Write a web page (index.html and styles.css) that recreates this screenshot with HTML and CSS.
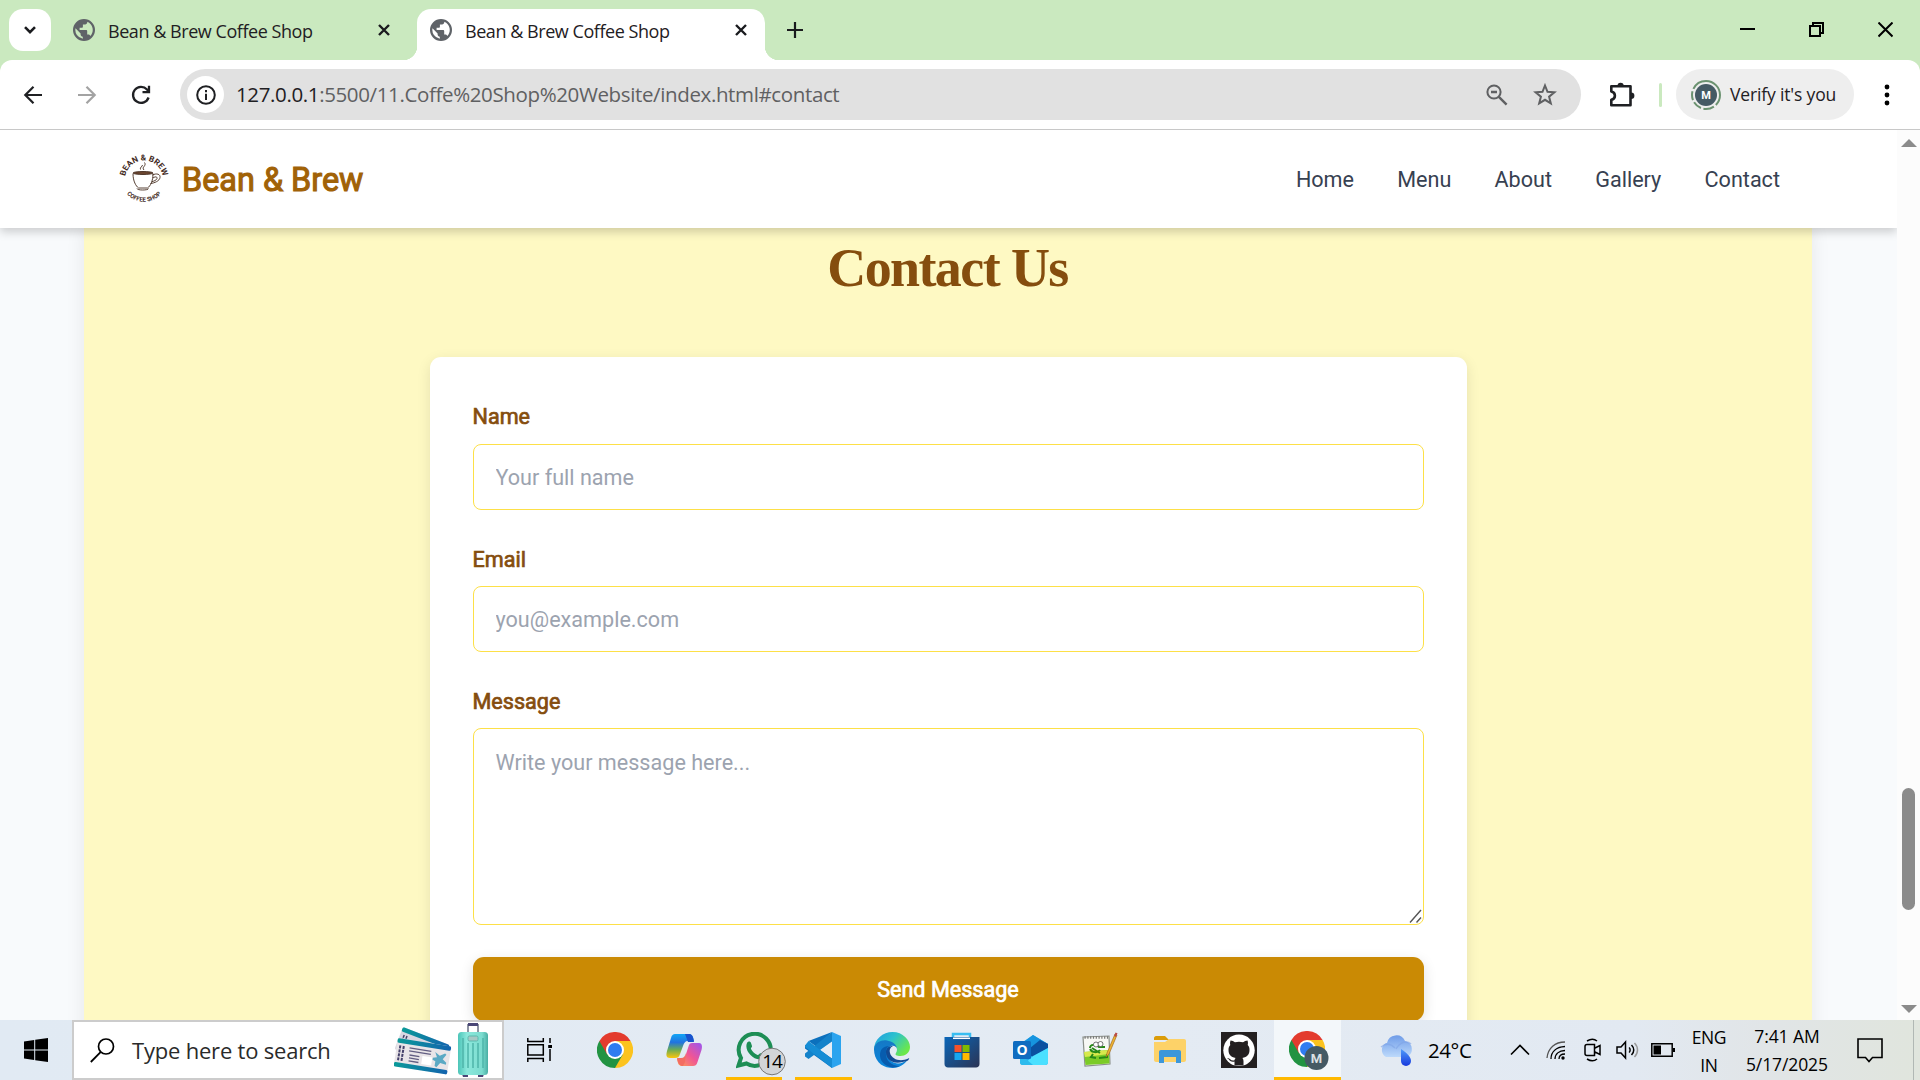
FILE: index.html
```html
<!DOCTYPE html>
<html lang="en">
<head>
<meta charset="utf-8">
<title>Bean &amp; Brew Coffee Shop</title>
<link rel="stylesheet" href="styles.css">
</head>
<body>
<svg width="0" height="0" class="defs">
  <defs>
    <symbol id="globe" viewBox="0 0 24 24"><path fill="#5f6368" d="M12 1a11 11 0 1 0 0 22 11 11 0 0 0 0-22zm-1.2 19.700A8.800 8.800 0 0 1 3.500 10.300L8.600 15.400v1.100c0 1.200 1 2.200 2.200 2.200zM18.400 17.900c-.3-.9-1.100-1.500-2.100-1.500h-1.100v-3.300c0-.6-.5-1.100-1.100-1.100H7.600V9.800h2.200c.6 0 1.100-.5 1.100-1.100V6.500h2.200c1.200 0 2.200-1 2.200-2.200v-.5a8.800 8.800 0 0 1 3.100 14.100z"/></symbol>
    <symbol id="close" viewBox="0 0 12 12"><path d="M1 1l10 10M11 1L1 11" stroke="#1a1b1e" stroke-width="2.400" fill="none"/></symbol>
    <symbol id="chrome" viewBox="0 0 36 36">
      <path fill="#e33b2e" d="M18 18L2.400 9A18 18 0 0 1 33.600 9z"/>
      <path fill="#fcc31e" d="M18 18L33.600 9A18 18 0 0 1 18 36z"/>
      <path fill="#229342" d="M18 18V36A18 18 0 0 1 2.400 9z"/>
      <path fill="#e33b2e" d="M2.400 9L10.200 22.500 18 9z"/>
      <path fill="#fcc31e" d="M33.600 9H18L25.800 22.500 18 36z"/>
      <path fill="#229342" d="M18 36L25.800 22.500H10.200z"/>
      <circle cx="18" cy="18" r="9" fill="#fff"/><circle cx="18" cy="18" r="7" fill="#2f7cf0"/>
    </symbol>
    <linearGradient id="gBlue" x1="0" y1="0" x2="1" y2="1"><stop offset="0" stop-color="#0a66b8"/><stop offset="1" stop-color="#2b3454"/></linearGradient>
    <linearGradient id="gCopL" x1="0" y1="0" x2="0" y2="1"><stop offset="0" stop-color="#12a5f5"/><stop offset=".35" stop-color="#2173e0"/><stop offset=".65" stop-color="#6aab55"/><stop offset="1" stop-color="#fdc60b"/></linearGradient>
    <linearGradient id="gCopR" x1="1" y1="0" x2="0" y2="1"><stop offset="0" stop-color="#9b56f0"/><stop offset=".5" stop-color="#ef5596"/><stop offset="1" stop-color="#ffa04f"/></linearGradient>
    <linearGradient id="gEdge" x1="0" y1="0" x2="1" y2=".6"><stop offset="0" stop-color="#1f9be2"/><stop offset=".5" stop-color="#2cc2cd"/><stop offset="1" stop-color="#6be84a"/></linearGradient>
    <linearGradient id="gEdge2" x1="0" y1="0" x2="0" y2="1"><stop offset="0" stop-color="#1578c5"/><stop offset="1" stop-color="#0a86dc"/></linearGradient>
    <linearGradient id="gCloud" x1="0" y1="0" x2="0" y2="1"><stop offset="0" stop-color="#6f9ce8"/><stop offset="1" stop-color="#bcd9fb"/></linearGradient>
    <linearGradient id="gDrop" x1="0" y1="0" x2="0" y2="1"><stop offset="0" stop-color="#4d9bfa"/><stop offset="1" stop-color="#1739dd"/></linearGradient>
    <linearGradient id="gCase" x1="0" y1="0" x2="1" y2="0"><stop offset="0" stop-color="#4cc5b8"/><stop offset=".3" stop-color="#8ce8dc"/><stop offset=".8" stop-color="#7bdccf"/><stop offset="1" stop-color="#49aea3"/></linearGradient>
    <linearGradient id="gTicket" x1="0" y1="0" x2="1" y2="0"><stop offset="0" stop-color="#0c9a99"/><stop offset="1" stop-color="#1263ae"/></linearGradient>
  </defs>
</svg>

<div class="screen">
  <div class="tabstrip">
    <button class="tab-search"><svg width="14" height="10" viewBox="0 0 14 10"><path d="M2 2.200l5 5 5-5" fill="none" stroke="#1a1b1e" stroke-width="2.600"/></svg></button>
    <div class="tab"><svg class="favicon"><use href="#globe"/></svg><span class="tab-title">Bean &amp; Brew Coffee Shop</span><svg class="tab-close"><use href="#close"/></svg></div>
    <div class="tab active"><svg class="favicon"><use href="#globe"/></svg><span class="tab-title">Bean &amp; Brew Coffee Shop</span><svg class="tab-close"><use href="#close"/></svg></div>
    <svg class="new-tab" viewBox="0 0 16 16"><path d="M8 0v16M0 8h16" stroke="#1a1b1e" stroke-width="2.200"/></svg>
    <div class="window-controls">
      <svg width="15" height="16"><path d="M0 7h15" stroke="#000" stroke-width="2"/></svg>
      <svg width="15" height="16" viewBox="0 0 15 16"><path d="M1 4h10v10H1zM4 4V1h10v10h-3" fill="none" stroke="#000" stroke-width="2"/></svg>
      <svg width="15" height="16" viewBox="0 0 15 16"><path d="M.5 .5l14 14M14.500 .5l-14 14" stroke="#000" stroke-width="2"/></svg>
    </div>
  </div>

  <div class="toolbar">
    <div class="nav-buttons">
      <svg width="20" height="20" viewBox="0 0 20 20"><path d="M19 10H3M10.500 1.800L2.300 10l8.200 8.200" fill="none" stroke="#1f2023" stroke-width="2.200"/></svg>
      <svg width="20" height="20" viewBox="0 0 20 20"><path d="M1 10h16M9.500 1.800l8.200 8.200-8.200 8.200" fill="none" stroke="#a3a3a3" stroke-width="2.200"/></svg>
      <svg width="20" height="20" viewBox="0 0 20 20"><path d="M17.600 12.500A8 8 0 1 1 16 4.500l2 2.200M18 .8v6.400h-6.500" fill="none" stroke="#1f2023" stroke-width="2.300"/></svg>
    </div>
    <div class="omnibox">
      <div class="info"><svg width="20" height="20" viewBox="0 0 20 20"><circle cx="10" cy="10" r="8.800" fill="none" stroke="#1f2023" stroke-width="2"/><path d="M10 8.800V15M10 5v2.200" stroke="#1f2023" stroke-width="2"/></svg></div>
      <span class="url"><b>127.0.0.1</b>:5500/11.Coffe%20Shop%20Website/index.html#contact</span>
      <svg class="zoom" width="22" height="22" viewBox="0 0 22 22"><circle cx="8" cy="8" r="6.600" fill="none" stroke="#5f6062" stroke-width="2"/><path d="M5 8h6M12.600 12.600l8 8" stroke="#5f6062" stroke-width="2.400"/></svg>
      <svg class="star" width="24" height="23" viewBox="0 0 24 23"><path d="M12 2.500l2.500 6.300 6.900.5-5.300 4.400 1.700 6.700L12 16.800l-5.800 3.600 1.700-6.700-5.300-4.400 6.900-.5z" fill="none" stroke="#5f6062" stroke-width="2"/></svg>
    </div>
    <svg class="puzzle" width="26" height="26" viewBox="0 0 26 26"><path d="M3 4.200h18.500v19H2.300v-5.400c4.800-1 4.800-7.200 0-8.200V4.200z" fill="none" stroke="#1f2023" stroke-width="2.600" stroke-linejoin="round"/><path d="M8.500 4a3.100 3.300 0 0 1 6.200 0zM22 10.500a3.300 3.100 0 0 1 0 6.400z" fill="#1f2023"/></svg>
    <i class="divider"></i>
    <div class="profile">
      <svg width="32" height="32" viewBox="0 0 32 32"><circle cx="16" cy="16" r="14" fill="none" stroke="#6b9270" stroke-width="2" stroke-dasharray="11 2.500 11 2.500 9 2.500 9 2.500 40"/><circle cx="16" cy="16" r="11" fill="#455a64"/><text x="16" y="20" text-anchor="middle" class="avatar-letter">M</text></svg>
      <span>Verify it's you</span>
    </div>
    <svg class="menu-dots" width="6" height="22" viewBox="0 0 6 22"><circle cx="3" cy="3" r="2.400"/><circle cx="3" cy="11" r="2.400"/><circle cx="3" cy="19" r="2.400"/></svg>
  </div>

  <div class="viewport">
    <div class="page">
      <header class="site-header">
        <div class="brand">
          <svg class="logo" width="50" height="50" viewBox="0 0 50 50">
            <path id="arcTop" d="M6 24.500A19 19 0 0 1 44 24.500" fill="none"/>
            <path id="arcBottom" d="M4.800 35A23.300 23.300 0 0 0 45.200 35" fill="none"/>
            <text class="logo-top"><textPath href="#arcTop" startOffset="50%" text-anchor="middle">BEAN &amp; BREW</textPath></text>
            <text class="logo-bottom"><textPath href="#arcBottom" startOffset="50%" text-anchor="middle">COFFEE SHOP</textPath></text>
            <g fill="none" stroke="#442b1e" stroke-width=".9"><path d="M14 18.500c0 8 3 12.500 5.500 14.500h9c3-2 5.500-7 5.500-14.500"/><ellipse cx="24" cy="18" rx="10" ry="1.500" fill="#6b4630"/><path d="M33.500 20c4-2 8-1 7.500 2.500-.4 3.500-5.500 5.500-9.500 6M34 23c2-1.600 4.500-1.600 4 .6-.5 1.500-3 2.600-5 3M18 33.500c0 2 11.500 2 11.500 0M25 15c-3-3 3-4 .5-7.500M21.500 14.500c-1-2 2-3 2-4.500"/></g>
          </svg>
          <span class="brand-name">Bean &amp; Brew</span>
        </div>
        <nav class="site-nav"><a>Home</a><a>Menu</a><a>About</a><a>Gallery</a><a>Contact</a></nav>
      </header>
      <main class="contact">
        <h2>Contact Us</h2>
        <form class="card">
          <label>Name</label>
          <input type="text" placeholder="Your full name">
          <label>Email</label>
          <input type="email" placeholder="you@example.com">
          <label>Message</label>
          <div class="message-field">
            <textarea placeholder="Write your message here..."></textarea>
            <svg class="grip" width="13" height="14" viewBox="0 0 13 14"><path d="M1 13.500L12 1M7.500 13.500L12 8.500" stroke="#555" stroke-width="1.400"/></svg>
          </div>
          <button type="button" class="send">Send Message</button>
        </form>
      </main>
    </div>
    <div class="scrollbar">
      <svg width="16" height="8"><path d="M8 0l8 8H0z" fill="#8b8b8b"/></svg>
      <i class="thumb"></i>
      <svg width="16" height="8"><path d="M0 0h16L8 8z" fill="#8b8b8b"/></svg>
    </div>
  </div>

  <div class="taskbar">
    <div class="start"><svg width="24" height="24" viewBox="0 0 24 24"><path d="M0 3.400l10.200-1.500v9.600H0zM11.200 1.700L24 0v11.500H11.200zM0 12.500h10.200v9.600L0 20.600zM11.200 12.500H24V24l-12.800-1.700z"/></svg></div>
    <div class="search">
      <svg width="25" height="25" viewBox="0 0 25 25"><circle cx="16" cy="8.500" r="7.500" fill="none" stroke="#000" stroke-width="1.700"/><path d="M10.800 13.800L.8 24" stroke="#000" stroke-width="1.800"/></svg>
      <span>Type here to search</span>
      <svg class="travel" width="98" height="56" viewBox="0 0 98 56">
        <g transform="translate(9 5) rotate(21)"><rect width="50" height="24" rx="2" fill="#d9d8e2"/><rect width="50" height="4.500" rx="1.500" fill="url(#gTicket)"/><path d="M4 7v14M7 7v14" stroke="#45416a" stroke-width="1.500" stroke-dasharray="3 1"/></g>
        <g transform="translate(4 16) rotate(9)"><rect width="54" height="28" rx="2" fill="#e9e5e8"/><rect width="54" height="4.500" rx="1.500" fill="url(#gTicket)"/><rect y="24" width="54" height="4.500" rx="1.500" fill="url(#gTicket)"/><path d="M3.500 7v15M7 7v15" stroke="#45416a" stroke-width="2" stroke-dasharray="3 1"/><path d="M13 8h22M13 11h22M14 15h10M14 18h10M14 21h10" stroke="#625e82" stroke-width="1.300"/><rect x="27" y="14" width="10" height="8" fill="#fff"/><path d="M39 8l5 3 5-3 1.500 1-3 5 4 3v2l-6-1-3 5-2-1v-5l-3-1v-2l4-1z" fill="#5ba9c4"/></g>
        <path d="M74 12V3h10v9" fill="none" stroke="#8d93a2" stroke-width="2"/><path d="M74 2.500h10" stroke="#4a4776" stroke-width="3"/>
        <path d="M68 52h6v3h-5zM84 52h6l-1 3h-5z" fill="#4a4776"/><rect x="64" y="10" width="30" height="43" rx="3.500" fill="url(#gCase)"/><path d="M69 16v30M74 21v25M79 21v25M84 21v25M89 16v30" stroke="#4fb5aa" stroke-width="1.500"/><rect x="74" y="14" width="10" height="5" rx="1.500" fill="#a6c8c5" stroke="#5bb9ad"/>
      </svg>
    </div>
    <div class="task-view"><svg width="25" height="24" viewBox="0 0 25 24" fill="none" stroke="#000" stroke-width="1.500"><path d="M.8 0v3.500h15.500V0M.8 24v-3.500h15.500V24M.8 6.800h15.500V17H.8z"/><path d="M23 0v5M23 11v12"/><path d="M21.200 8.500h3.800" stroke-width="3"/></svg></div>
    <div class="apps">
      <div class="app"><svg width="36" height="36"><use href="#chrome"/></svg></div>
      <div class="app"><svg width="36" height="36" viewBox="0 0 36 36"><path d="M9 2h14c3 0 4 2 5 7h-6c-3 0-4 2-5 5l-3 8c-1 3-2 4-5 4H4c-4 0-4-3-3-7L5 6c.8-3 2-4 4-4z" fill="url(#gCopL)"/><path d="M19 2h4c3 0 4 2 5 8h-6z" fill="#1a52cc"/><path d="M27 34H16c-3 0-4-2-5-7h4c3 0 4-2 5-5l3-9c1-2 2-2 5-2h5c3 0 3.500 3 2.500 7l-4 12c-.8 3-2.500 4-4.500 4z" fill="url(#gCopR)"/><path d="M11 26h4c3 0 4-2 5-5l-1 9-2 4c-3 0-5-2-6-8z" fill="#f36d62"/></svg></div>
      <div class="app running"><svg class="with-badge" width="50" height="44" viewBox="0 0 50 44"><path d="M2.500 33.500L5 26A16 16 0 1 1 10.500 31.500z" fill="none" stroke="#1d8e55" stroke-width="4"/><path d="M11 11c1-2 3.500-2 4 0l1 3c.4 1-1.500 2-1 3 1.500 3 4 5 6.500 6 1.300.2 2-2 3-1.800l4 2c1 2-2 4.500-5 4.300C16 27 8 18 11 11z" fill="#1d8e55"/><circle cx="36" cy="29.500" r="13.300" fill="#d3d5d7" stroke="#777" stroke-width="1"/><text x="36" y="36" text-anchor="middle" class="badge-text">14</text></svg></div>
      <div class="app running"><svg width="36" height="36" viewBox="0 0 36 36"><path d="M27 0L9.500 16.500 3.500 11.500 0 13.500v3L27 36v-10L3.500 9" fill="#0b70bd"/><path d="M27 10L3.500 27 0 24.500v-3L27 0z" fill="#1382ca"/><path d="M27 9.500L15 18l12 8.500z" fill="#e6edf5"/><path d="M0 13.500L3.500 9 27 27v9L0 15z" fill="#168dd5"/><path d="M27 0l9 4v28l-9 4z" fill="#2ba4ef"/></svg></div>
      <div class="app"><svg width="36" height="36" viewBox="0 0 36 36"><path d="M0 18C0 7 9 0 18.500 0 29 0 36 8 36 15c0 6-5 9-9.500 9-4 0-6-1-4.500-3 3-5-1-9-6-9-6 0-10 4-10 11z" fill="url(#gEdge)"/><path d="M0 17C1 10 8 7.500 13 8.500c5 .8 10 4 10 8.500 0-2-3-4-6-3-5 2-5 11 0 15 5 4 12 3 17-2-4 7-11 9.500-18 8.800C7 35 0 28 0 17z" fill="url(#gEdge2)"/><path d="M12 20c0 8 7 14 22 8.500l1-1.500c.5-.5 0-1-.7-.5C27 30 18 28 16 21c-1-4 1-6 3-7-4 0-7 2-7 6z" fill="#124a93"/><path d="M12 20c-1 7 4 14 14 14-9 4-19-1-20-10-.3-6 3-10 9-10-2 1-3 3-3 6z" fill="#075cae"/></svg></div>
      <div class="app"><svg width="36" height="36" viewBox="0 0 36 36"><path d="M9 6V2h17v4" fill="none" stroke="#38bdf1" stroke-width="2.500"/><path d="M.5 5h35v27c0 2-1.500 3.500-3.500 3.500H4C2 35.500.5 34 .5 32z" fill="url(#gBlue)"/><path d="M9 6.300h17" stroke="#fff" stroke-width="1.500"/><path fill="#f4522a" d="M10.500 13h7v7h-7z"/><path fill="#7fba00" d="M18.500 13h7v7h-7z"/><path fill="#16a7ef" d="M10.500 21h7v7h-7z"/><path fill="#ffb900" d="M18.500 21h7v7h-7z"/></svg></div>
      <div class="app"><svg width="36" height="32" viewBox="0 0 36 32"><path d="M20 1l15 9v18c0 2-1 3-3 3H10c-2 0-3-1-3-3V10z" fill="#28a8ea"/><path d="M20 1l15 9-15 9L8 10z" fill="#1694df"/><path d="M35 10v4L20 23l-8-5 15-12z" fill="#0b50a0"/><path d="M35 14v14c0 2-1 3-3 3H10l10-9z" fill="#4be0ff"/><path d="M7 20l13 11H10c-2 0-3-1-3-3z" fill="#2cbbed"/><rect y="7" width="18" height="18" rx="1.500" fill="#0f6cc0"/><text x="9" y="21" text-anchor="middle" class="outlook-letter">O</text></svg></div>
      <div class="app"><svg width="36" height="36" viewBox="0 0 36 36"><path d="M1 5l26-1 1 28-25 2z" fill="#f7f8f4" stroke="#8b9089" stroke-width="1.200"/><path d="M2.500 5.500h24" stroke="#777" stroke-width="2.500" stroke-dasharray="1.200 1.600"/><path d="M2 20l25-2 .5 13.500L3.500 33z" fill="#7bcb27"/><path d="M2 20l25-2v4L3 25z" fill="#d8e84c"/><path d="M8 16c0-4 6-4 9-1h6M8 17c2 4 8 4 10 1M10 16l8 5M11 22l-2 3 5 1M17 26l8-1v-3" fill="none" stroke="#278917" stroke-width="2"/><circle cx="14" cy="12.500" r="2.500" fill="#fff" stroke="#555" stroke-width=".8"/><circle cx="18.500" cy="12" r="2.500" fill="#fff" stroke="#555" stroke-width=".8"/><path d="M24 25l1-4 8-19 2 1-8 19z" fill="#eeb431" stroke="#a36b20" stroke-width=".7"/><path d="M32 4l1.500-3.500 2 .8L34 5z" fill="#bb4b48"/></svg></div>
      <div class="app"><svg width="32" height="28" viewBox="0 0 32 28"><path d="M0 2C0 1 1 0 2 0h9l4 4H0z" fill="#db9c09"/><path d="M0 6h11l4-3h15c1.200 0 2 .8 2 2v19c0 1-1 2-2 2H2c-1 0-2-1-2-2z" fill="#fdd268"/><path d="M5 16c0-1.200.8-2 2-2h18c1.200 0 2 .8 2 2v11h-5v-6H10v6H5z" fill="#3c97da"/></svg></div>
      <div class="app"><svg width="36" height="36" viewBox="0 0 36 36"><path fill="#231f20" d="M0 0h36v36H0z"/><circle cx="18" cy="18.300" r="15.700" fill="#fff"/><path d="M13.500 33.500v-4c-5 1-5-2.500-7.500-3.500 3-.7 3.500 3.500 7.500 2.200.2-1 .6-1.800 1.200-2.200-5-.7-7.200-3.500-7.200-8.200 0-2.200.7-3.700 1.800-4.900-.4-1.200-.4-2.800.3-4.500 1.500 0 3.300 1 4.400 1.900a16 16 0 0 1 8 0c1.200-.9 3-1.900 4.500-1.900.6 1.700.6 3.300.2 4.500 1.200 1.200 1.800 2.700 1.800 4.900 0 4.700-2.200 7.500-7.200 8.200.7.600 1.200 1.700 1.200 3.200v4.300z" fill="#231f20"/></svg></div>
      <div class="app running current"><svg width="40" height="40" viewBox="0 0 40 40"><use href="#chrome" width="36" height="36" y="1"/><circle cx="27.500" cy="28" r="12" fill="#455a64"/><text x="27.500" y="33" text-anchor="middle" class="m-badge">M</text></svg></div>
    </div>
    <div class="weather"><svg width="37" height="34" viewBox="0 0 37 34"><path d="M8 24a8 8 0 0 1 0-14h1a9.500 9.500 0 0 1 18-2 8.500 8.500 0 0 1 2 16z" fill="url(#gCloud)"/><path d="M3 14c5-4 10-3 14 1M18 16c4-7 11-9 15-5" stroke="#7ea4e6" stroke-width="1.500" fill="none" opacity=".6"/><path d="M23 16c6 4 10 8 10 12a5 5 0 0 1-10 0z" fill="url(#gDrop)"/></svg><span>24°C</span></div>
    <div class="tray">
      <svg width="20" height="20" viewBox="0 0 20 20"><path d="M1 14.500l9-9 9 9" fill="none" stroke="#000" stroke-width="1.600"/></svg>
      <svg width="20" height="20" viewBox="0 0 20 20"><g fill="none" stroke="#000" stroke-width="1.300"><path d="M1 18C2 8 9 2 19 2" stroke="#555"/><path d="M5 19C5 11 11 7 19 6.500"/><path d="M9 19c0-5 4-8.500 10-8.500"/><path d="M13 19c0-3 2-5 6-5"/></g><circle cx="17" cy="18" r="1.700"/></svg>
      <svg width="18" height="24" viewBox="0 0 18 24"><path d="M3 6.500h7.500v11H3c-1.300 0-2-.7-2-2v-7c0-1.300.7-2 2-2zM11 10l5-2.500v9L11 14M3 3c4-2.500 7-2.500 10 0M3 21c4 2.500 7 2.500 10 0" fill="none" stroke="#000" stroke-width="1.500"/></svg>
      <svg width="24" height="20" viewBox="0 0 24 20" fill="none" stroke="#000" stroke-width="1.500"><path d="M1 7h4l4.500-5v16L5 13H1zM13 7.500c1.500 1 1.500 4 0 5M15.500 5c3 3 3 7 0 10"/><path d="M18.500 3c4 4 4 10 0 14" stroke="#999"/></svg>
      <svg width="24" height="14" viewBox="0 0 24 14"><path d="M.8.8h20.400v12.400H.8z" fill="none" stroke="#000" stroke-width="1.500"/><path d="M2.500 2.500H10v9H2.500zM22 5h2v4h-2z"/></svg>
    </div>
    <div class="lang"><span>ENG</span><span>IN</span></div>
    <div class="clock"><span>7:41 AM</span><span>5/17/2025</span></div>
    <div class="notify"><svg width="26" height="25" viewBox="0 0 26 25"><path d="M1 1h24v18.500h-9.500L12 23.500l-3.500-4H1z" fill="none" stroke="#000" stroke-width="1.600"/></svg></div>
    <i class="show-desktop"></i>
  </div>
</div>
</body>
</html>
```
FILE: styles.css
```css
* { box-sizing: border-box; }
body { margin: 0; font-family: "Open Sans", "Noto Sans", sans-serif; color: #1f2023; overflow: hidden; }
svg { display: block; flex: none; }
.defs { height: 0; }
span, a, label { white-space: nowrap; }
.screen { width: 1920px; height: 1080px; display: flex; flex-direction: column; background: #cae9bf; }

/* Tab strip */
.tabstrip { height: 60px; display: flex; align-items: center; padding-left: 9px; }
.tab-search { width: 42px; height: 42px; border: 0; border-radius: 14px; background: #fff; display: grid; place-items: center; padding: 0; }
.tab { width: 357px; height: 51px; margin-left: 9px; align-self: flex-end; display: flex; align-items: center; padding: 0 27px 9px 12px; border-radius: 14px 14px 0 0; }
.tab.active { width: 348px; margin-left: 0; padding-right: 18px; background: #fff; position: relative; }
.tab.active::before, .tab.active::after { content: ""; position: absolute; bottom: 0; width: 14px; height: 14px; }
.tab.active::before { left: -14px; background: radial-gradient(circle at 0 0, transparent 14px, #fff 14.500px); }
.tab.active::after { right: -14px; background: radial-gradient(circle at 100% 0, transparent 14px, #fff 14.500px); }
.favicon { width: 24px; height: 24px; }
.tab-title { font-size: 18px; letter-spacing: -0.450px; margin-left: 12px; flex: 1; line-height: 24px; padding-top: 1px; }
.tab-close { width: 12px; height: 12px; }
.new-tab { width: 16px; height: 16px; margin-left: 22px; }
.window-controls { margin-left: auto; margin-right: 27px; display: flex; gap: 54px; }

/* Toolbar */
.toolbar { height: 70px; background: #fff; border-bottom: 1px solid #c8c8c8; display: flex; align-items: center; padding-left: 23px; border-radius: 12px 12px 0 0; }
.nav-buttons { display: flex; gap: 34px; margin-right: 29px; }
.omnibox { width: 1401px; height: 51px; border-radius: 26px; background: #e1e1e1; display: flex; align-items: center; padding: 0 24px 0 7px; }
.info { width: 37px; height: 37px; border-radius: 50%; background: #fff; display: grid; place-items: center; }
.url { font-size: 20.500px; letter-spacing: -0.370px; margin-left: 12px; flex: 1; color: #5f6062; padding-bottom: 2px; }
.url b { font-weight: 400; color: #1f2023; }
.star { margin-left: 25px; }
.puzzle { margin-left: 28px; }
.divider { width: 3px; height: 24px; border-radius: 2px; background: #cae9bf; margin-left: 24px; }
.profile { width: 178px; height: 51px; border-radius: 26px; background: #eee; margin-left: 14px; padding-left: 14px; display: flex; align-items: center; font-size: 17.500px; letter-spacing: -0.150px; }
.profile span { margin-left: 8px; padding-bottom: 1px; }
.avatar-letter { font: 700 11px Roboto, sans-serif; letter-spacing: 0; fill: #fff; }
.menu-dots { margin-left: 30px; }

/* Web page */
.viewport { height: 890px; flex: none; display: flex; background: #f8fafc; overflow: hidden; }
.page { width: 1897px; height: 890px; overflow: hidden; font-family: Roboto, sans-serif; font-size: 21.600px; display: flex; flex-direction: column; align-items: center; }
.site-header { width: 100%; height: 98px; flex: none; background: #fff; display: flex; align-items: center; justify-content: space-between; padding: 2px 117px 0 119px; box-shadow: 0 4px 9px rgba(0,0,0,.18); position: relative; z-index: 1; }
.brand { display: flex; align-items: center; }
.brand-name { font-size: 32.400px; color: #a16207; -webkit-text-stroke: 1.100px #a16207; margin-left: 13px; }
.logo { overflow: visible; }
.logo-top { font: 700 8.200px Roboto, sans-serif; fill: #442b1e; }
.logo-bottom { font: 700 6px Roboto, sans-serif; fill: #442b1e; }
.site-nav { display: flex; gap: 43.200px; color: #374151; padding-bottom: 2px; }
.contact { width: 1728px; flex: none; height: 900px; background: #fef9c3; box-shadow: 0 0 18px rgba(0,0,0,.08); display: flex; flex-direction: column; align-items: center; margin-right: 1px; }
.contact h2 { margin: 10px 1px 0 0; height: 119px; font: 700 54px/60px "Liberation Serif", serif; letter-spacing: -1.600px; color: #854d0e; }
.card { width: 1037px; height: 760px; background: #fff; border-radius: 11px; padding: 43px; box-shadow: 0 4px 14px rgba(0,0,0,.1); display: flex; flex-direction: column; }
.card label { color: #854d0e; -webkit-text-stroke: .7px #854d0e; height: 44px; line-height: 32px; padding-top: 1px; }
.card input + label { padding-top: 2px; }
.card input, .card textarea { width: 100%; border: 1px solid #fde047; border-radius: 8px; padding: 0 22px; font: 21.600px Roboto, sans-serif; outline: 0; background: #fff; }
.card input { height: 66px; flex: none; margin: 0 0 32px; }
.message-field { position: relative; height: 197px; margin-bottom: 32px; flex: none; }
.card textarea { display: block; height: 197px; padding-top: 21px; resize: none; }
.grip { position: absolute; right: 2px; bottom: 2px; }
.card ::placeholder { color: #9ca3af; opacity: 1; }
.send { height: 64px; flex: none; border: 0; border-radius: 11px; background: #ca8a04; color: #fff; font: 21.600px Roboto, sans-serif; -webkit-text-stroke: .7px #fff; box-shadow: 0 4px 14px rgba(0,0,0,.12); }
.scrollbar { width: 23px; background: #fcfcfc; display: flex; flex-direction: column; align-items: center; padding: 9px 0 7px; }
.thumb { width: 13px; height: 122px; border-radius: 7px; background: #8b8b8b; margin: 641px 0 95px; }

/* Taskbar */
.taskbar { height: 60px; flex: none; display: flex; align-items: center; color: #000; background: linear-gradient(90deg, #e1eaf3 0, #e4ebf3 60%, #e2e9f2 85%, #e1e5e7 92%, #e0e5dd 100%); }
.start { width: 72px; display: grid; place-items: center; }
.search { width: 432px; height: 60px; background: #fff; border: 2px solid #ccc; display: flex; align-items: center; padding: 0 10px 0 16px; }
.search span { margin-left: 17px; font-size: 22px; letter-spacing: -.2px; flex: 1; color: #2a2a2a; }
.task-view { width: 76px; padding-left: 23px; }
.apps { display: flex; height: 60px; }
.app { width: 69.400px; height: 60px; display: grid; place-items: center; position: relative; }
.running::after { content: ""; position: absolute; left: 7px; right: 6px; bottom: 0; height: 3px; background: #ffb900; }
.with-badge { margin: 8px 0 0 15px; }
.current { background: #f3f7fa; width: 67px; }
.current svg { margin-left: 3px; }
.current::after { left: 0; right: 0; }
.badge-text { font: 19px "Open Sans", sans-serif; letter-spacing: -1px; }
.outlook-letter { font: 700 14px "Open Sans", sans-serif; fill: #fff; }
.m-badge { font: 700 13px Roboto, sans-serif; fill: #dbe1e4; }
.weather { display: flex; align-items: center; margin-left: 37px; width: 132px; font-size: 20.500px; }
.weather span { margin-left: 13px; letter-spacing: -.4px; }
.tray { display: flex; align-items: center; width: 167px; gap: 16.500px; }
.tray svg:nth-child(3) { margin-left: 1px; }
.tray svg:nth-child(4) { margin-left: -2px; }
.tray svg:nth-child(5) { margin-left: -6px; }
.lang, .clock { display: flex; flex-direction: column; align-items: center; font-size: 17.500px; line-height: 28px; letter-spacing: -.1px; }
.lang { width: 64px; letter-spacing: -.5px; padding-top: 1px; }
.clock { width: 92px; }
.notify { margin-left: 24px; }
.show-desktop { width: 1px; height: 60px; background: #b1b8b4; margin-left: 30px; }
```
